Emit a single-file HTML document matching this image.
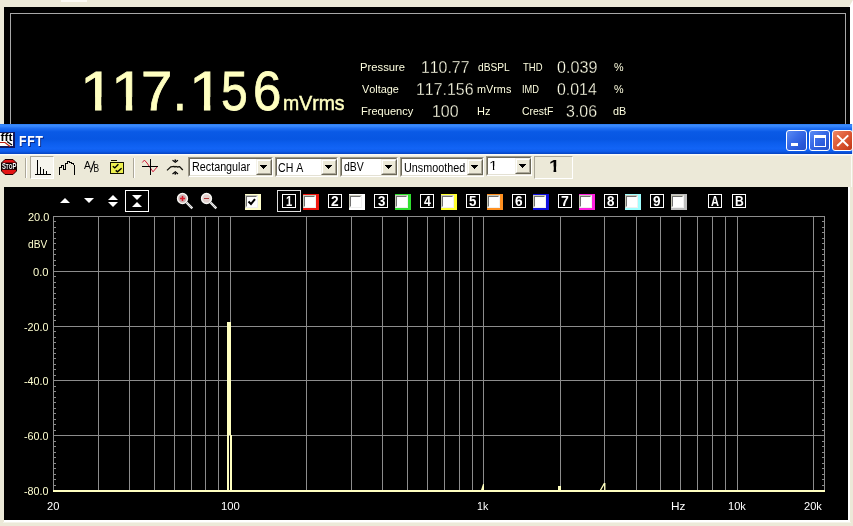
<!DOCTYPE html>
<html><head><meta charset="utf-8"><title>FFT</title>
<style>
html,body{margin:0;padding:0;}
body{width:853px;height:526px;overflow:hidden;background:#ECE9D8;position:relative;font-family:"Liberation Sans",sans-serif;font-kerning:none;font-variant-ligatures:none;}
.a{position:absolute;}
.t{position:absolute;white-space:nowrap;line-height:1;}
.top{left:4px;top:7px;width:846px;height:117px;background:#000;}
.topb{left:10px;top:13px;width:836px;height:111px;border:1px solid #A8A8A8;border-bottom:none;box-sizing:border-box;}
.title{left:0;top:124px;width:852px;height:30px;background:linear-gradient(to bottom,#2C7CF2 0%,#3C8CFF 6%,#2070F4 14%,#0A5AE6 26%,#0756E2 50%,#0C5EEE 64%,#1264F6 82%,#0E5CEA 91%,#0542C0 100%);}
.cb{position:absolute;top:130px;width:21px;height:21px;box-sizing:border-box;border:1px solid #fff;border-radius:3px;background:linear-gradient(135deg,#5C8CF4 0%,#3A6CE8 40%,#2858D8 75%,#2450C8 100%);}
.cb.x{background:linear-gradient(135deg,#EE8868 0%,#E0603C 40%,#D04824 75%,#C03818 100%);}
.tool{left:0;top:154px;width:853px;height:33px;background:#ECE9D8;}
.combo{position:absolute;top:157px;height:20px;box-sizing:border-box;background:#fff;border:1px solid;border-color:#9C9888 #fff #fff #9C9888;}
.combo:before{content:"";position:absolute;left:0;top:0;right:0;bottom:0;border:1px solid;border-color:#6E6B5C #E4E1D4 #E4E1D4 #6E6B5C;}
.combo .b{position:absolute;right:0px;top:1px;width:16px;height:16px;background:#ECE9D8;box-sizing:border-box;border:1px solid;border-color:#F4F2E8 #6B6858 #6B6858 #F4F2E8;}
.combo .b:before{content:"";position:absolute;left:0;top:0;right:0;bottom:0;border:1px solid;border-color:#fff #ACA899 #ACA899 #fff;}
.chart{left:4px;top:187px;width:844px;height:333px;background:#000;}
.nb{position:absolute;top:194px;width:14px;height:14px;box-sizing:border-box;border:1px solid #fff;}
.cc{position:absolute;top:194px;width:16px;height:16px;}
.cc i{position:absolute;left:0;top:1px;width:13px;height:13px;box-sizing:border-box;background:#fff;border:1px solid;border-color:#C8C8B8 #F0F0F0 #F0F0F0 #C8C8B8;}
.cc i:before{content:"";position:absolute;left:0;top:0;right:0;bottom:0;border:1px solid;border-color:#707070 #fff #fff #707070;}
</style></head><body><div id="root" style="position:absolute;left:0;top:0;width:853px;height:526px;overflow:hidden;will-change:transform">

<div class="a" style="left:61px;top:0;width:26px;height:2px;background:#FBFAF4"></div>
<div class="a" style="left:850px;top:7px;width:3px;height:117px;background:#fff"></div>
<svg class="a" style="left:845px;top:0" width="8" height="7"><polygon points="8,0 8,7 4,7" fill="#fff"/></svg>
<div class="a top"></div>
<div class="a topb"></div>
<div class="t" style="left:0;top:64px;font-size:55.5px;color:#FFFFC0;-webkit-text-stroke:0.8px #FFFFC0;transform:translateY(-0.4px)"><span style="display:inline-block;width:31.18px;transform-origin:0 0;transform:scaleX(1.1150);margin-left:80.06px;clip-path:polygon(-1em -1em,2em -1em,2em .6em,.348em .6em,.348em 2em,.243em 2em,.243em .6em,-1em .6em);">1</span><span style="display:inline-block;width:30.18px;transform-origin:0 0;transform:scaleX(1.1003);clip-path:polygon(-1em -1em,2em -1em,2em .6em,.348em .6em,.348em 2em,.243em 2em,.243em .6em,-1em .6em);">1</span><span style="display:inline-block;width:32.08px;transform-origin:0 0;transform:scaleX(1.0147);">7</span><span style="display:inline-block;width:15.61px;transform-origin:0 0;transform:scaleX(0.8894);">.</span><span style="display:inline-block;width:32.18px;transform-origin:0 0;transform:scaleX(1.1077);clip-path:polygon(-1em -1em,2em -1em,2em .6em,.348em .6em,.348em 2em,.243em 2em,.243em .6em,-1em .6em);">1</span><span style="display:inline-block;width:31.54px;transform-origin:0 0;transform:scaleX(0.8665);">5</span><span style="display:inline-block;width:32.00px;transform-origin:0 0;transform:scaleX(0.9176);">6</span></div>
<div class="t" style="left:282.91px;top:92.00px;font-size:21px;color:#FFFFC0;transform-origin:0 0;transform:scaleX(0.9264);-webkit-text-stroke:0.5px #FFFFC0;">mVrms</div>
<div class="t" style="left:359.68px;top:62.00px;font-size:11px;color:#FFFFE0;transform-origin:0 0;transform:scaleX(1.0229);">Pressure</div>
<div class="t" style="left:361.85px;top:84.00px;font-size:11px;color:#FFFFE0;transform-origin:0 0;transform:scaleX(0.9899);">Voltage</div>
<div class="t" style="left:360.59px;top:106.00px;font-size:11px;color:#FFFFE0;transform-origin:0 0;transform:scaleX(1.0069);">Frequency</div>
<div class="t" style="left:477.57px;top:62.00px;font-size:11px;color:#FFFFE0;transform-origin:0 0;transform:scaleX(0.9276);">dBSPL</div>
<div class="t" style="left:477.28px;top:84.00px;font-size:11px;color:#FFFFE0;transform-origin:0 0;transform:scaleX(0.9852);">mVrms</div>
<div class="t" style="left:477.10px;top:106.00px;font-size:11px;color:#FFFFE0;transform-origin:0 0;transform:scaleX(1.0005);">Hz</div>
<div class="t" style="left:522.99px;top:62.00px;font-size:11px;color:#FFFFE0;transform-origin:0 0;transform:scaleX(0.8611);">THD</div>
<div class="t" style="left:522.34px;top:84.00px;font-size:11px;color:#FFFFE0;transform-origin:0 0;transform:scaleX(0.8431);">IMD</div>
<div class="t" style="left:522.17px;top:106.00px;font-size:11px;color:#FFFFE0;transform-origin:0 0;transform:scaleX(0.9468);">CrestF</div>
<div class="t" style="left:613.82px;top:62.00px;font-size:11px;color:#FFFFE0;transform-origin:0 0;transform:scaleX(0.9781);">%</div>
<div class="t" style="left:613.82px;top:84.00px;font-size:11px;color:#FFFFE0;transform-origin:0 0;transform:scaleX(0.9781);">%</div>
<div class="t" style="left:613.45px;top:106.00px;font-size:11px;color:#FFFFE0;transform-origin:0 0;transform:scaleX(0.9829);">dB</div>
<div class="t" style="left:421.39px;top:60.00px;font-size:16.8px;color:#FFFFE8;transform-origin:0 0;transform:scaleX(0.9440);-webkit-text-stroke:0.3px #000;">110.77</div>
<div class="t" style="left:416.49px;top:82.00px;font-size:16.8px;color:#FFFFE8;transform-origin:0 0;transform:scaleX(0.9487);-webkit-text-stroke:0.3px #000;">117.156</div>
<div class="t" style="left:432.38px;top:104.00px;font-size:16.8px;color:#FFFFE8;transform-origin:0 0;transform:scaleX(0.9504);-webkit-text-stroke:0.3px #000;">100</div>
<div class="t" style="left:556.97px;top:60.00px;font-size:16.8px;color:#FFFFE8;transform-origin:0 0;transform:scaleX(0.9608);-webkit-text-stroke:0.3px #000;">0.039</div>
<div class="t" style="left:556.98px;top:82.00px;font-size:16.8px;color:#FFFFE8;transform-origin:0 0;transform:scaleX(0.9464);-webkit-text-stroke:0.3px #000;">0.014</div>
<div class="t" style="left:566.19px;top:104.00px;font-size:16.8px;color:#FFFFE8;transform-origin:0 0;transform:scaleX(0.9515);-webkit-text-stroke:0.3px #000;">3.06</div>
<div class="a title"></div>
<div class="a" style="left:852px;top:124px;width:1px;height:30px;background:#DCE6F8"></div>
<svg class="a" style="left:-1px;top:132px" width="16" height="16" viewBox="0 0 16 16">
<rect x="0" y="0" width="16" height="16" fill="#101860"/><rect x="0" y="1" width="14" height="13" fill="#fff"/>
<text x="1.5" y="9" font-family="Liberation Sans, sans-serif" font-weight="bold" font-size="10" fill="#000" textLength="12" lengthAdjust="spacingAndGlyphs">fft</text>
<path d="M0 10.5 H6 L11 14.5" stroke="#C02010" stroke-width="1.2" fill="none"/>
<path d="M8 9.5 L13 13" stroke="#000" stroke-width="1.3" fill="none"/>
</svg>
<div class="t" style="left:19.19px;top:134.00px;font-size:14.5px;color:#fff;font-weight:bold;transform-origin:0 0;transform:scaleX(0.8400);text-shadow:1px 1px 0 #0A2A8C;letter-spacing:1.027px;">FFT</div>
<div class="cb" style="left:786px"><div class="a" style="left:4px;top:12px;width:7px;height:3px;background:#fff"></div></div>
<div class="cb" style="left:809px"><div class="a" style="left:4px;top:4px;width:12px;height:12px;box-sizing:border-box;border:1px solid #fff;border-top-width:3px"></div></div>
<div class="cb x" style="left:832px"><svg class="a" style="left:0;top:0" width="19" height="19"><path d="M4.2 4.4 L15.2 15 M15.2 4.4 L4.2 15" stroke="#fff" stroke-width="2" fill="none"/></svg></div>
<div class="a tool"></div>
<div class="a" style="left:0;top:154px;width:853px;height:1px;background:#FCFBF6"></div><div class="a" style="left:0;top:155px;width:853px;height:1px;background:#F3F1E7"></div>
<svg class="a" style="left:1px;top:159px" width="16" height="16" viewBox="0 0 16 16">
<polygon points="4,0.5 12,0.5 15.5,4 15.5,12 12,15.5 4,15.5 0.5,12 0.5,4" fill="#E41414" stroke="#200000" stroke-width="1"/>
<rect x="0.5" y="3.6" width="15" height="7.2" fill="#080000"/>
<text x="0.9" y="10.2" font-family="Liberation Sans, sans-serif" font-weight="bold" fill="#fff" textLength="14.4" lengthAdjust="spacingAndGlyphs"><tspan font-size="9.2">S</tspan><tspan font-size="7.4">TO</tspan><tspan font-size="9.2">P</tspan></text>
</svg>
<div class="a" style="left:25px;top:158px;width:1px;height:20px;background:#ACA899"></div><div class="a" style="left:26px;top:158px;width:1px;height:20px;background:#fff"></div>
<div class="a" style="left:851px;top:156px;width:1px;height:31px;background:#FBFAF6"></div>
<div class="a" style="left:30px;top:156px;width:24px;height:23px;box-sizing:border-box;background:#F6F5EE;border:1px solid;border-color:#ACA899 #fff #fff #ACA899"></div>
<svg class="a" style="left:34px;top:158px" width="20" height="20" shape-rendering="crispEdges" fill="#000"><rect x="1" y="16" width="16" height="1"/><rect x="3" y="2" width="1" height="14"/><rect x="6" y="9" width="1" height="7"/><rect x="9" y="11" width="1" height="5"/><rect x="12" y="13" width="1" height="3"/></svg>
<svg class="a" style="left:58px;top:158px" width="20" height="20" shape-rendering="crispEdges" fill="#000"><rect x="1" y="9" width="1" height="8"/><rect x="2" y="9" width="1" height="1"/><rect x="3" y="7" width="1" height="3"/><rect x="4" y="7" width="1" height="1"/><rect x="5" y="7" width="1" height="5"/><rect x="6" y="11" width="1" height="1"/><rect x="7" y="5" width="1" height="7"/><rect x="8" y="5" width="1" height="1"/><rect x="9" y="3" width="1" height="3"/><rect x="10" y="3" width="2" height="1"/><rect x="11" y="4" width="3" height="1"/><rect x="13" y="5" width="3" height="1"/><rect x="15" y="6" width="1" height="1"/><rect x="16" y="7" width="1" height="10"/></svg>
<svg class="a" style="left:83px;top:158px" width="19" height="19" font-family="Liberation Sans, sans-serif">
<text x="0.9" y="10.6" font-size="10.2" fill="#000">A</text>
<path d="M11.4 3 L7.4 14.2" stroke="#000" stroke-width="1.1" fill="none"/>
<text x="10.6" y="13.9" font-size="10.2" fill="#000" textLength="5.6" lengthAdjust="spacingAndGlyphs">B</text></svg>
<svg class="a" style="left:109px;top:158px" width="17" height="18">
<rect x="1.5" y="4.5" width="13" height="11" fill="#EEF050" stroke="#101000" stroke-width="1" shape-rendering="crispEdges"/>
<rect x="2" y="3" width="6" height="1" fill="#F4F4A0" shape-rendering="crispEdges"/>
<rect x="2" y="2" width="6" height="1" fill="#101000" shape-rendering="crispEdges"/>
<path d="M3.8 8.3 L5.8 9.9 L9.4 6.2 M6.7 12.4 L8.5 13.8 L12.6 10.3" stroke="#000" stroke-width="1.4" fill="none"/></svg>
<div class="a" style="left:133px;top:158px;width:1px;height:20px;background:#ACA899"></div><div class="a" style="left:134px;top:158px;width:1px;height:20px;background:#fff"></div>
<svg class="a" style="left:141px;top:158px" width="19" height="19">
<path d="M1.3 4.5 L3.4 2.1 L6 5 L12 13.8 L16.5 8.5" stroke="#D01838" stroke-width="1" fill="none"/>
<path d="M9.5 1 V17 M1 8.5 H17" stroke="#000" stroke-width="1" shape-rendering="crispEdges"/>
</svg>
<svg class="a" style="left:166px;top:158px" width="19" height="19">
<path d="M1 12.4 L4.8 8.8 L8 8.4 L9 9 L10 8.4 L11.5 9 L13.6 8.6 L16.8 12" stroke="#101008" stroke-width="1.3" fill="none"/>
<path d="M6.5 2.2 L9.3 4.2 L12 2.2 M6.5 16 L9.3 13.8 L12 16" stroke="#000" stroke-width="1.1" fill="none"/>
<rect x="8.5" y="1.5" width="1.6" height="1.6" fill="#000"/><rect x="8.5" y="15" width="1.6" height="1.6" fill="#000"/>
</svg>
<div class="combo" style="left:188px;top:157px;width:85px"><span class="b"><svg width="7" height="4" style="position:absolute;left:3px;top:5px" shape-rendering="crispEdges"><path d="M0 0H7V1H6V2H5V3H4V4H3V3H2V2H1V1H0Z" fill="#000"/></svg></span></div>
<div class="t" style="left:192.02px;top:161.00px;font-size:12.5px;color:#000;transform-origin:0 0;transform:scaleX(0.8614);">Rectangular</div>
<div class="combo" style="left:275px;top:157px;width:63px"><span class="b"><svg width="7" height="4" style="position:absolute;left:3px;top:5px" shape-rendering="crispEdges"><path d="M0 0H7V1H6V2H5V3H4V4H3V3H2V2H1V1H0Z" fill="#000"/></svg></span></div>
<div class="t" style="left:278.06px;top:162.00px;font-size:12.5px;color:#000;transform-origin:0 0;transform:scaleX(0.8457);">CH A</div>
<div class="combo" style="left:340px;top:157px;width:58px"><span class="b"><svg width="7" height="4" style="position:absolute;left:3px;top:5px" shape-rendering="crispEdges"><path d="M0 0H7V1H6V2H5V3H4V4H3V3H2V2H1V1H0Z" fill="#000"/></svg></span></div>
<div class="t" style="left:344.26px;top:161.00px;font-size:12.5px;color:#000;transform-origin:0 0;transform:scaleX(0.8374);">dBV</div>
<div class="combo" style="left:400px;top:157px;width:84px"><span class="b"><svg width="7" height="4" style="position:absolute;left:3px;top:5px" shape-rendering="crispEdges"><path d="M0 0H7V1H6V2H5V3H4V4H3V3H2V2H1V1H0Z" fill="#000"/></svg></span></div>
<div class="t" style="left:403.77px;top:162.00px;font-size:12.5px;color:#000;transform-origin:0 0;transform:scaleX(0.8625);">Unsmoothed</div>
<div class="combo" style="left:486px;top:156px;width:46px"><span class="b"><svg width="7" height="4" style="position:absolute;left:3px;top:5px" shape-rendering="crispEdges"><path d="M0 0H7V1H6V2H5V3H4V4H3V3H2V2H1V1H0Z" fill="#000"/></svg></span></div>
<div class="a" style="left:534px;top:156px;width:39px;height:23px;box-sizing:border-box;border:1px solid;border-color:#ACA899 #fff #fff #ACA899"></div>
<div class="t" style="left:488.50px;top:160px;font-size:12.5px;color:#000;transform-origin:0 0;transform:scaleX(1.2459);clip-path:polygon(-1em -1em,2em -1em,2em .5em,0.34em .5em,0.34em 2em,0.251em 2em,0.251em .5em,-1em .5em)">1</div>
<div class="t" style="left:548.78px;top:158px;font-size:17px;color:#000;font-weight:bold;transform-origin:0 0;transform:scaleX(1.1454);clip-path:polygon(-1em -1em,2em -1em,2em .5em,0.371em .5em,0.371em 2em,0.233em 2em,0.233em .5em,-1em .5em)">1</div>
<div class="a chart"></div>
<div class="a" style="left:848px;top:187px;width:2px;height:335px;background:#fff"></div>
<div class="a" style="left:4px;top:520px;width:846px;height:2px;background:#fff"></div><div class="a" style="left:3px;top:522px;width:848px;height:1px;background:#F5F3EA"></div>
<svg class="a" style="left:0;top:187px" width="853" height="333" viewBox="0 187 853 333" shape-rendering="crispEdges">
<rect x="53" y="216" width="772" height="1" fill="#8C8C8C"/>
<rect x="53" y="271" width="772" height="1" fill="#8C8C8C"/>
<rect x="53" y="326" width="772" height="1" fill="#8C8C8C"/>
<rect x="53" y="380" width="772" height="1" fill="#8C8C8C"/>
<rect x="53" y="435" width="772" height="1" fill="#8C8C8C"/>
<rect x="53" y="216" width="1" height="275" fill="#8C8C8C"/>
<rect x="824" y="216" width="1" height="275" fill="#8C8C8C"/>
<rect x="98" y="216" width="1" height="275" fill="#8C8C8C"/>
<rect x="129" y="216" width="1" height="275" fill="#8C8C8C"/>
<rect x="154" y="216" width="1" height="275" fill="#8C8C8C"/>
<rect x="174" y="216" width="1" height="275" fill="#8C8C8C"/>
<rect x="191" y="216" width="1" height="275" fill="#8C8C8C"/>
<rect x="205" y="216" width="1" height="275" fill="#8C8C8C"/>
<rect x="218" y="216" width="1" height="275" fill="#8C8C8C"/>
<rect x="230" y="216" width="1" height="275" fill="#8C8C8C"/>
<rect x="306" y="216" width="1" height="275" fill="#8C8C8C"/>
<rect x="351" y="216" width="1" height="275" fill="#8C8C8C"/>
<rect x="382" y="216" width="1" height="275" fill="#8C8C8C"/>
<rect x="407" y="216" width="1" height="275" fill="#8C8C8C"/>
<rect x="427" y="216" width="1" height="275" fill="#8C8C8C"/>
<rect x="444" y="216" width="1" height="275" fill="#8C8C8C"/>
<rect x="459" y="216" width="1" height="275" fill="#8C8C8C"/>
<rect x="472" y="216" width="1" height="275" fill="#8C8C8C"/>
<rect x="483" y="216" width="1" height="275" fill="#8C8C8C"/>
<rect x="560" y="216" width="1" height="275" fill="#8C8C8C"/>
<rect x="604" y="216" width="1" height="275" fill="#8C8C8C"/>
<rect x="636" y="216" width="1" height="275" fill="#8C8C8C"/>
<rect x="660" y="216" width="1" height="275" fill="#8C8C8C"/>
<rect x="680" y="216" width="1" height="275" fill="#8C8C8C"/>
<rect x="697" y="216" width="1" height="275" fill="#8C8C8C"/>
<rect x="712" y="216" width="1" height="275" fill="#8C8C8C"/>
<rect x="725" y="216" width="1" height="275" fill="#8C8C8C"/>
<rect x="737" y="216" width="1" height="275" fill="#8C8C8C"/>
<rect x="813" y="216" width="1" height="275" fill="#8C8C8C"/>
<rect x="53" y="221" width="3" height="1" fill="#8C8C8C"/>
<rect x="822" y="221" width="3" height="1" fill="#8C8C8C"/>
<rect x="53" y="227" width="3" height="1" fill="#8C8C8C"/>
<rect x="822" y="227" width="3" height="1" fill="#8C8C8C"/>
<rect x="53" y="232" width="3" height="1" fill="#8C8C8C"/>
<rect x="822" y="232" width="3" height="1" fill="#8C8C8C"/>
<rect x="53" y="238" width="3" height="1" fill="#8C8C8C"/>
<rect x="822" y="238" width="3" height="1" fill="#8C8C8C"/>
<rect x="53" y="243" width="3" height="1" fill="#8C8C8C"/>
<rect x="822" y="243" width="3" height="1" fill="#8C8C8C"/>
<rect x="53" y="249" width="3" height="1" fill="#8C8C8C"/>
<rect x="822" y="249" width="3" height="1" fill="#8C8C8C"/>
<rect x="53" y="254" width="3" height="1" fill="#8C8C8C"/>
<rect x="822" y="254" width="3" height="1" fill="#8C8C8C"/>
<rect x="53" y="260" width="3" height="1" fill="#8C8C8C"/>
<rect x="822" y="260" width="3" height="1" fill="#8C8C8C"/>
<rect x="53" y="265" width="3" height="1" fill="#8C8C8C"/>
<rect x="822" y="265" width="3" height="1" fill="#8C8C8C"/>
<rect x="53" y="276" width="3" height="1" fill="#8C8C8C"/>
<rect x="822" y="276" width="3" height="1" fill="#8C8C8C"/>
<rect x="53" y="282" width="3" height="1" fill="#8C8C8C"/>
<rect x="822" y="282" width="3" height="1" fill="#8C8C8C"/>
<rect x="53" y="287" width="3" height="1" fill="#8C8C8C"/>
<rect x="822" y="287" width="3" height="1" fill="#8C8C8C"/>
<rect x="53" y="293" width="3" height="1" fill="#8C8C8C"/>
<rect x="822" y="293" width="3" height="1" fill="#8C8C8C"/>
<rect x="53" y="298" width="3" height="1" fill="#8C8C8C"/>
<rect x="822" y="298" width="3" height="1" fill="#8C8C8C"/>
<rect x="53" y="304" width="3" height="1" fill="#8C8C8C"/>
<rect x="822" y="304" width="3" height="1" fill="#8C8C8C"/>
<rect x="53" y="309" width="3" height="1" fill="#8C8C8C"/>
<rect x="822" y="309" width="3" height="1" fill="#8C8C8C"/>
<rect x="53" y="315" width="3" height="1" fill="#8C8C8C"/>
<rect x="822" y="315" width="3" height="1" fill="#8C8C8C"/>
<rect x="53" y="320" width="3" height="1" fill="#8C8C8C"/>
<rect x="822" y="320" width="3" height="1" fill="#8C8C8C"/>
<rect x="53" y="331" width="3" height="1" fill="#8C8C8C"/>
<rect x="822" y="331" width="3" height="1" fill="#8C8C8C"/>
<rect x="53" y="337" width="3" height="1" fill="#8C8C8C"/>
<rect x="822" y="337" width="3" height="1" fill="#8C8C8C"/>
<rect x="53" y="342" width="3" height="1" fill="#8C8C8C"/>
<rect x="822" y="342" width="3" height="1" fill="#8C8C8C"/>
<rect x="53" y="348" width="3" height="1" fill="#8C8C8C"/>
<rect x="822" y="348" width="3" height="1" fill="#8C8C8C"/>
<rect x="53" y="353" width="3" height="1" fill="#8C8C8C"/>
<rect x="822" y="353" width="3" height="1" fill="#8C8C8C"/>
<rect x="53" y="358" width="3" height="1" fill="#8C8C8C"/>
<rect x="822" y="358" width="3" height="1" fill="#8C8C8C"/>
<rect x="53" y="364" width="3" height="1" fill="#8C8C8C"/>
<rect x="822" y="364" width="3" height="1" fill="#8C8C8C"/>
<rect x="53" y="369" width="3" height="1" fill="#8C8C8C"/>
<rect x="822" y="369" width="3" height="1" fill="#8C8C8C"/>
<rect x="53" y="375" width="3" height="1" fill="#8C8C8C"/>
<rect x="822" y="375" width="3" height="1" fill="#8C8C8C"/>
<rect x="53" y="386" width="3" height="1" fill="#8C8C8C"/>
<rect x="822" y="386" width="3" height="1" fill="#8C8C8C"/>
<rect x="53" y="391" width="3" height="1" fill="#8C8C8C"/>
<rect x="822" y="391" width="3" height="1" fill="#8C8C8C"/>
<rect x="53" y="397" width="3" height="1" fill="#8C8C8C"/>
<rect x="822" y="397" width="3" height="1" fill="#8C8C8C"/>
<rect x="53" y="402" width="3" height="1" fill="#8C8C8C"/>
<rect x="822" y="402" width="3" height="1" fill="#8C8C8C"/>
<rect x="53" y="408" width="3" height="1" fill="#8C8C8C"/>
<rect x="822" y="408" width="3" height="1" fill="#8C8C8C"/>
<rect x="53" y="413" width="3" height="1" fill="#8C8C8C"/>
<rect x="822" y="413" width="3" height="1" fill="#8C8C8C"/>
<rect x="53" y="419" width="3" height="1" fill="#8C8C8C"/>
<rect x="822" y="419" width="3" height="1" fill="#8C8C8C"/>
<rect x="53" y="424" width="3" height="1" fill="#8C8C8C"/>
<rect x="822" y="424" width="3" height="1" fill="#8C8C8C"/>
<rect x="53" y="430" width="3" height="1" fill="#8C8C8C"/>
<rect x="822" y="430" width="3" height="1" fill="#8C8C8C"/>
<rect x="53" y="441" width="3" height="1" fill="#8C8C8C"/>
<rect x="822" y="441" width="3" height="1" fill="#8C8C8C"/>
<rect x="53" y="446" width="3" height="1" fill="#8C8C8C"/>
<rect x="822" y="446" width="3" height="1" fill="#8C8C8C"/>
<rect x="53" y="452" width="3" height="1" fill="#8C8C8C"/>
<rect x="822" y="452" width="3" height="1" fill="#8C8C8C"/>
<rect x="53" y="457" width="3" height="1" fill="#8C8C8C"/>
<rect x="822" y="457" width="3" height="1" fill="#8C8C8C"/>
<rect x="53" y="463" width="3" height="1" fill="#8C8C8C"/>
<rect x="822" y="463" width="3" height="1" fill="#8C8C8C"/>
<rect x="53" y="468" width="3" height="1" fill="#8C8C8C"/>
<rect x="822" y="468" width="3" height="1" fill="#8C8C8C"/>
<rect x="53" y="474" width="3" height="1" fill="#8C8C8C"/>
<rect x="822" y="474" width="3" height="1" fill="#8C8C8C"/>
<rect x="53" y="479" width="3" height="1" fill="#8C8C8C"/>
<rect x="822" y="479" width="3" height="1" fill="#8C8C8C"/>
<rect x="53" y="485" width="3" height="1" fill="#8C8C8C"/>
<rect x="822" y="485" width="3" height="1" fill="#8C8C8C"/>
<rect x="53" y="490" width="772" height="2" fill="#FFFFC0"/>
<rect x="227" y="322" width="4" height="113" fill="#FFFFC0"/>
<rect x="227" y="435" width="2" height="56" fill="#FFFFC0"/>
<rect x="230" y="435" width="2" height="56" fill="#FFFFC0"/>
<polygon points="481,490 483,484 484,484 484,490" fill="#FFFFC0" shape-rendering="auto"/>
<rect x="558" y="486" width="3" height="4" fill="#FFFFC0"/>
<path d="M600.3 490.5 L604.2 483.6 L604.8 483.6 L604.8 490.5" fill="none" stroke="#FFFFC0" stroke-width="1.3" shape-rendering="auto"/>
</svg>
<div class="t" style="left:27.55px;top:212.00px;font-size:11px;color:#FFFFD0;transform-origin:0 0;transform:scaleX(0.9987);">20.0</div>
<div class="t" style="left:33.36px;top:267.00px;font-size:11px;color:#FFFFD0;transform-origin:0 0;transform:scaleX(1.0186);">0.0</div>
<div class="t" style="left:24.42px;top:322.00px;font-size:11px;color:#FFFFD0;transform-origin:0 0;transform:scaleX(0.9771);">-20.0</div>
<div class="t" style="left:24.42px;top:376.00px;font-size:11px;color:#FFFFD0;transform-origin:0 0;transform:scaleX(0.9771);">-40.0</div>
<div class="t" style="left:24.42px;top:431.00px;font-size:11px;color:#FFFFD0;transform-origin:0 0;transform:scaleX(0.9771);">-60.0</div>
<div class="t" style="left:24.42px;top:486.00px;font-size:11px;color:#FFFFD0;transform-origin:0 0;transform:scaleX(0.9771);">-80.0</div>
<div class="t" style="left:28.07px;top:239.00px;font-size:11px;color:#FFFFD0;transform-origin:0 0;transform:scaleX(0.9270);">dBV</div>
<div class="t" style="left:47.34px;top:501.00px;font-size:11px;color:#fff;transform-origin:0 0;transform:scaleX(1.0131);">20</div>
<div class="t" style="left:220.94px;top:501.00px;font-size:11px;color:#fff;transform-origin:0 0;transform:scaleX(1.0243);">100</div>
<div class="t" style="left:477.19px;top:501.00px;font-size:11px;color:#fff;transform-origin:0 0;transform:scaleX(0.9726);">1k</div>
<div class="t" style="left:670.53px;top:501.00px;font-size:11px;color:#fff;transform-origin:0 0;transform:scaleX(1.0756);">Hz</div>
<div class="t" style="left:728.36px;top:501.00px;font-size:11px;color:#fff;transform-origin:0 0;transform:scaleX(1.0051);">10k</div>
<div class="t" style="left:804.14px;top:501.00px;font-size:11px;color:#fff;transform-origin:0 0;transform:scaleX(1.0059);">20k</div>
<svg class="a" style="left:0;top:187px" width="260" height="30" viewBox="0 187 260 30">
<polygon points="60,203 65.0,198 70,203" fill="#fff"/>
<polygon points="84,198 89.0,203 94,198" fill="#fff"/>
<polygon points="108,200 113.0,195 118,200" fill="#fff"/>
<polygon points="108,202 113.0,207 118,202" fill="#fff"/>
<rect x="125.5" y="190.5" width="23" height="21" fill="none" stroke="#fff" stroke-width="1"/>
<polygon points="132,195 137.0,200 142,195" fill="#fff"/>
<polygon points="132,207 137.0,202 142,207" fill="#fff"/>
<path d="M186.5 202.5 L192.3 208.3" stroke="#F0F0F0" stroke-width="2.4"/>
<path d="M187.5 203.5 L192 208" stroke="#707070" stroke-width="0.7" stroke-dasharray="1 1"/>
<circle cx="182.5" cy="198.5" r="4.9" fill="#CDB0B0" stroke="#F8F8F4" stroke-width="1.5"/>
<path d="M180 198.5 H185 M182.5 196 V201" stroke="#D81828" stroke-width="1.5"/>
<path d="M210.5 202.5 L216.3 208.3" stroke="#F0F0F0" stroke-width="2.4"/>
<path d="M211.5 203.5 L216 208" stroke="#707070" stroke-width="0.7" stroke-dasharray="1 1"/>
<circle cx="206.5" cy="198.5" r="4.9" fill="#E2D0CE" stroke="#F8F8F4" stroke-width="1.5"/>
<path d="M204 198.5 H209" stroke="#B03838" stroke-width="1"/>
</svg>
<div class="cc" style="left:245px;background:#FFFFCC"><i></i><svg class="a" style="left:2px;top:3px" width="10" height="10"><path d="M1.5 4.5 L4 7 L8 2.2" stroke="#000" stroke-width="2" fill="none"/></svg></div>
<div class="a" style="left:277px;top:190px;width:24px;height:22px;box-sizing:border-box;border:1px solid #E0E0E0"></div>
<div class="nb" style="left:282px"></div>
<div class="t" style="left:285.70px;top:194.00px;font-size:14px;color:#fff;font-weight:bold;transform-origin:0 0;transform:scaleX(0.7982);">1</div>
<div class="cc" style="left:303px;background:#F01810"><i></i></div>
<div class="nb" style="left:328px"></div>
<div class="t" style="left:331.32px;top:194.00px;font-size:14px;color:#fff;font-weight:bold;transform-origin:0 0;transform:scaleX(0.9792);">2</div>
<div class="cc" style="left:349px;background:#FFFFFF"><i></i></div>
<div class="nb" style="left:374px"></div>
<div class="t" style="left:377.50px;top:194.00px;font-size:14px;color:#fff;font-weight:bold;transform-origin:0 0;transform:scaleX(0.9484);">3</div>
<div class="cc" style="left:395px;background:#30E030"><i></i></div>
<div class="nb" style="left:420px"></div>
<div class="t" style="left:423.61px;top:194.00px;font-size:14px;color:#fff;font-weight:bold;transform-origin:0 0;transform:scaleX(0.8801);">4</div>
<div class="cc" style="left:441px;background:#FFFF30"><i></i></div>
<div class="nb" style="left:466px"></div>
<div class="t" style="left:469.39px;top:194.00px;font-size:14px;color:#fff;font-weight:bold;transform-origin:0 0;transform:scaleX(0.9475);">5</div>
<div class="cc" style="left:487px;background:#FF9020"><i></i></div>
<div class="nb" style="left:512px"></div>
<div class="t" style="left:515.30px;top:194.00px;font-size:14px;color:#fff;font-weight:bold;transform-origin:0 0;transform:scaleX(0.9752);">6</div>
<div class="cc" style="left:533px;background:#1010E0"><i></i></div>
<div class="nb" style="left:558px"></div>
<div class="t" style="left:561.20px;top:194.00px;font-size:14px;color:#fff;font-weight:bold;transform-origin:0 0;transform:scaleX(1.0047);">7</div>
<div class="cc" style="left:579px;background:#FF20E0"><i></i></div>
<div class="nb" style="left:604px"></div>
<div class="t" style="left:607.38px;top:194.00px;font-size:14px;color:#fff;font-weight:bold;transform-origin:0 0;transform:scaleX(0.9550);">8</div>
<div class="cc" style="left:625px;background:#A0FFFF"><i></i></div>
<div class="nb" style="left:650px"></div>
<div class="t" style="left:653.33px;top:194.00px;font-size:14px;color:#fff;font-weight:bold;transform-origin:0 0;transform:scaleX(0.9733);">9</div>
<div class="cc" style="left:671px;background:#C0C0C0"><i></i></div>
<div class="nb" style="left:708px"></div>
<div class="t" style="left:711.13px;top:194.00px;font-size:14px;color:#fff;font-weight:bold;transform-origin:0 0;transform:scaleX(0.7879);">A</div>
<div class="nb" style="left:732px"></div>
<div class="t" style="left:734.59px;top:194.00px;font-size:14px;color:#fff;font-weight:bold;transform-origin:0 0;transform:scaleX(0.8667);">B</div>
</div></body></html>
